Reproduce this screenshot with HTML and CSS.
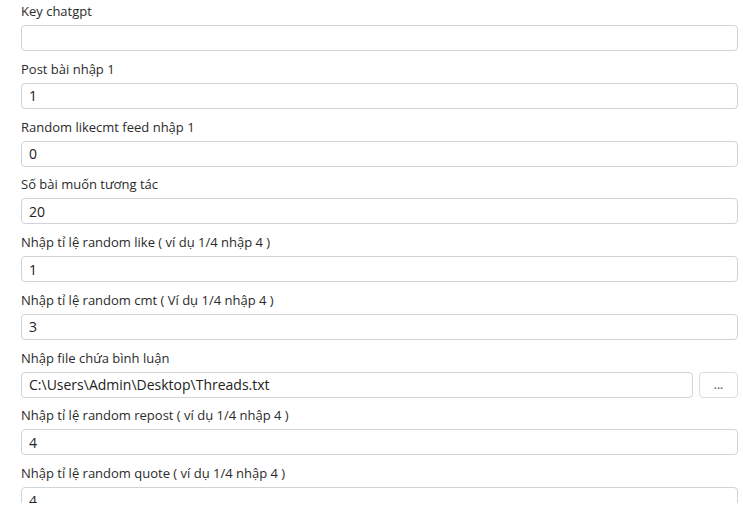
FILE: index.html
```html
<!DOCTYPE html>
<html lang="vi">

<head>
    <meta charset="UTF-8">
    <meta name="viewport" content="width=device-width, initial-scale=1.0">
    <title>Cấu hình</title>
    <link rel="stylesheet" href="styles.css">
</head>

<body>
    <div class="panel">
        <form class="settings">
            <div class="field">
                <label>Key chatgpt</label>
                <input type="text" class="box" value="">
            </div>
            <div class="field">
                <label>Post bài nhập 1</label>
                <input type="text" class="box" value="1">
            </div>
            <div class="field">
                <label>Random likecmt feed nhập 1</label>
                <input type="text" class="box" value="0">
            </div>
            <div class="field">
                <label>Số bài muốn tương tác</label>
                <input type="text" class="box" value="20">
            </div>
            <div class="field">
                <label>Nhập tỉ lệ random like ( ví dụ 1/4 nhập 4 )</label>
                <input type="text" class="box" value="1">
            </div>
            <div class="field">
                <label>Nhập tỉ lệ random cmt ( Ví dụ 1/4 nhập 4 )</label>
                <input type="text" class="box" value="3">
            </div>
            <div class="field">
                <label>Nhập file chứa bình luận</label>
                <div class="file-row">
                    <input type="text" class="box" value="C:\Users\Admin\Desktop\Threads.txt">
                    <button type="button" class="browse">...</button>
                </div>
            </div>
            <div class="field">
                <label>Nhập tỉ lệ random repost ( ví dụ 1/4 nhập 4 )</label>
                <input type="text" class="box" value="4">
            </div>
            <div class="field">
                <label>Nhập tỉ lệ random quote ( ví dụ 1/4 nhập 4 )</label>
                <input type="text" class="box" value="4">
            </div>
        </form>
    </div>
</body>

</html>
```

FILE: styles.css
```css
* {
    margin: 0;
    padding: 0;
    box-sizing: border-box;
}

body {
    font-family: "Open Sans", "Noto Sans", sans-serif;
    font-size: 13px;
    color: #2b2b2b;
    background: #fff;
    overflow: hidden;
}

/* khung cuộn, nội dung bị cắt ở dưới */
.panel {
    height: 503px;
    overflow: hidden;
}

.settings {
    padding: 1px 5px 0 21px;
}

.field {
    margin-bottom: 7.75px;
}

.field label {
    display: block;
    line-height: 20px;
    margin-bottom: 4px;
}

.box {
    display: block;
    width: 100%;
    height: 26px;
    padding: 0 7px;
    border: 1px solid #ced4da;
    border-radius: 4px;
    font-family: inherit;
    font-size: 14px;
    color: #222;
    background: #fff;
    outline: none;
}

.file-row {
    display: flex;
    gap: 6px;
}

.file-row .box {
    flex: 1;
}

.browse {
    width: 39px;
    height: 26px;
    border: 1px solid #dcdcdc;
    border-radius: 4px;
    background: #fff;
    color: #6c757d;
    font-family: inherit;
    font-size: 11px;
    font-weight: bold;
    line-height: 18px;
}
```
